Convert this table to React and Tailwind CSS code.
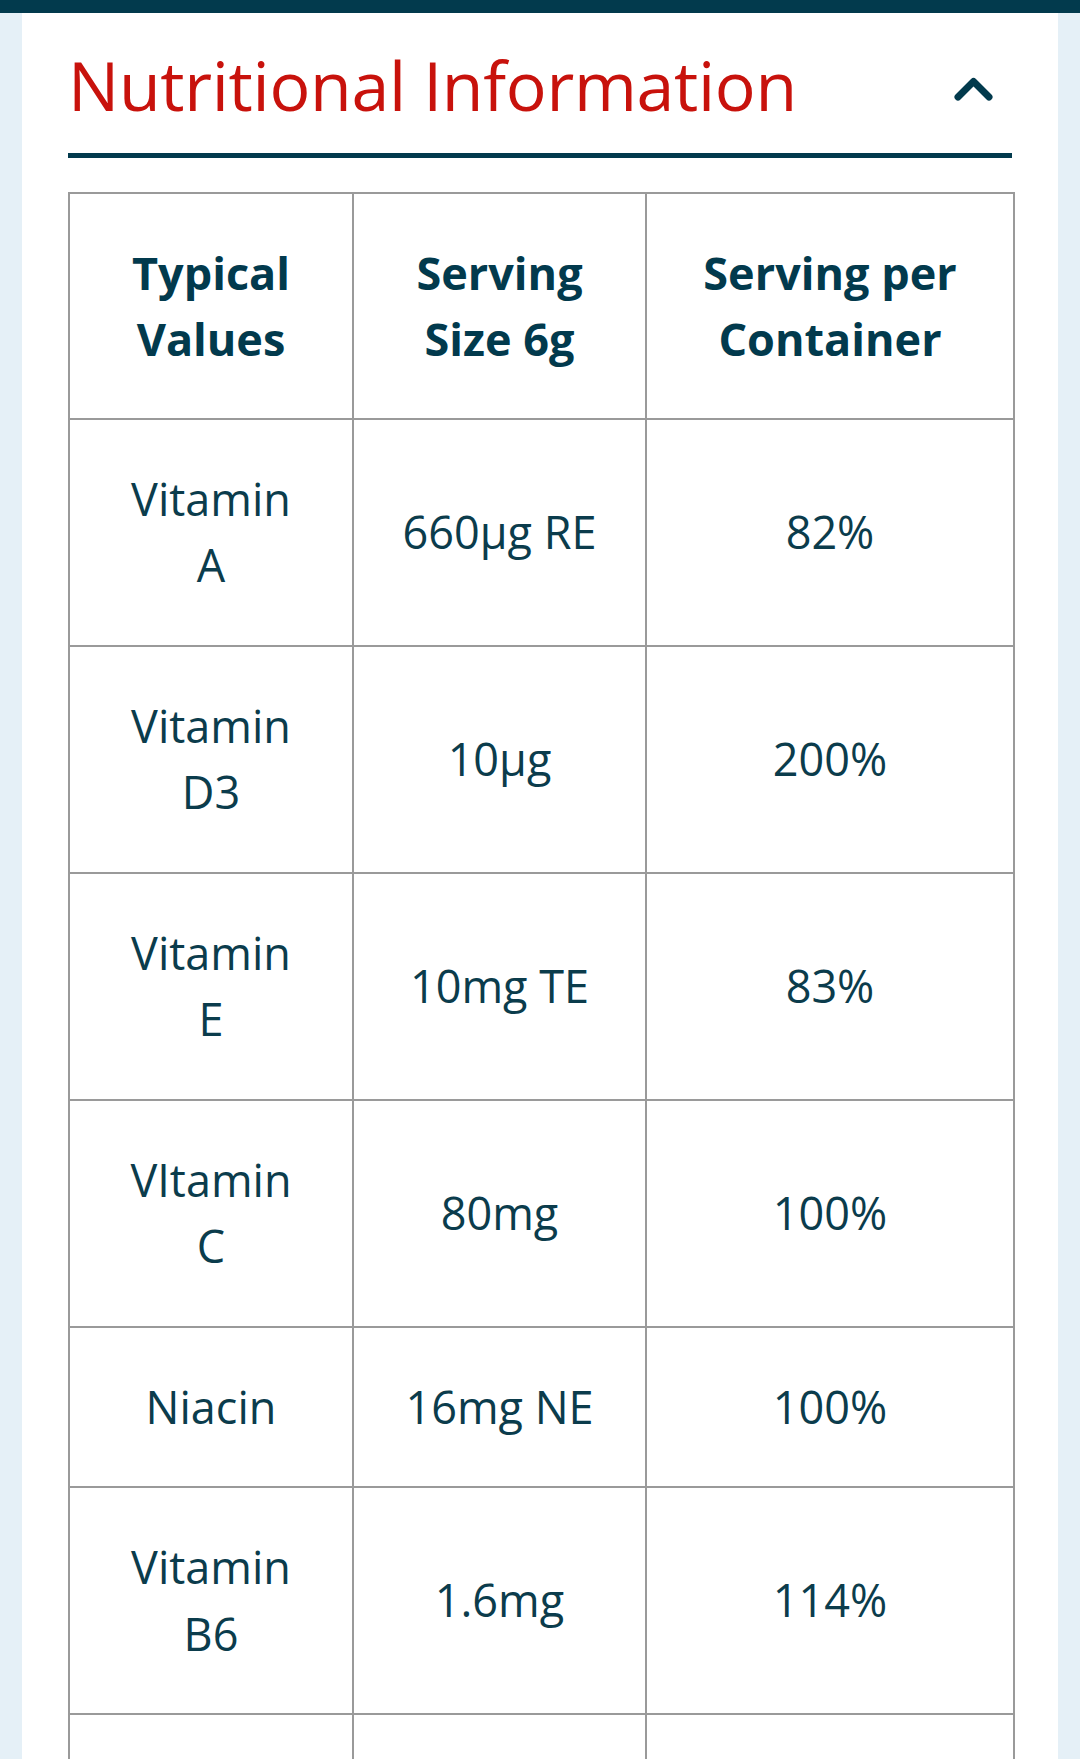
const rows = [
  { name: ['Vitamin', 'A'], amount: '660µg RE', pct: '82%' },
  { name: ['Vitamin', 'D3'], amount: '10µg', pct: '200%' },
  { name: ['Vitamin', 'E'], amount: '10mg TE', pct: '83%' },
  { name: ['VItamin', 'C'], amount: '80mg', pct: '100%' },
  { name: ['Niacin'], amount: '16mg NE', pct: '100%' },
  { name: ['Vitamin', 'B6'], amount: '1.6mg', pct: '114%' },
]

const cell = 'border-2 border-[#9a9a9a] px-[44px] py-[46px] text-center align-middle'

const App = () => {
  return (
    <div
      className="min-h-screen bg-[#e5f0f7] border-t-[13px] border-[#023a4d] px-[22px]"
      style={{ fontFamily: '"Open Sans", "Noto Sans", sans-serif' }}
    >
      <div className="bg-white px-[46px] pt-[26px] pb-10 min-h-[1746px]">
        <div className="flex items-start justify-between border-b-[5px] border-[#023a4d] pb-[21px]">
          <h2 className="text-[68px] leading-[1.362] font-normal text-[#c8120c] tracking-[-0.3px]">
            Nutritional Information
          </h2>
          <button className="mr-[19px] mt-[38px]" aria-label="Collapse">
            <svg width="39" height="24" viewBox="0 0 39 24" fill="none">
              <polyline
                points="4,20 19.5,4.5 35,20"
                stroke="#023a4d"
                strokeWidth="7"
                strokeLinecap="round"
                strokeLinejoin="round"
              />
            </svg>
          </button>
        </div>

        <table className="mt-[34px] w-[945px] table-fixed border-collapse text-[#0b3c4c]">
          <colgroup>
            <col className="w-[284px]" />
            <col className="w-[293px]" />
            <col className="w-[368px]" />
          </colgroup>
          <thead>
            <tr className="text-[45px] leading-[66px] font-extrabold text-[#023a4d]">
              <th className={cell}>Typical Values</th>
              <th className={cell}>Serving Size 6g</th>
              <th className={cell}>Serving per Container</th>
            </tr>
          </thead>
          <tbody>
            {rows.map((r) => (
              <tr key={r.name.join(' ')} className="text-[45px] leading-[66.5px]">
                <td className={cell}>
                  {r.name.map((n) => (
                    <div key={n}>{n}</div>
                  ))}
                </td>
                <td className={cell}>{r.amount}</td>
                <td className={cell}>{r.pct}</td>
              </tr>
            ))}
            <tr className="h-[226px]">
              <td className={cell}></td>
              <td className={cell}></td>
              <td className={cell}></td>
            </tr>
          </tbody>
        </table>
      </div>
    </div>
  )
}

export default App
